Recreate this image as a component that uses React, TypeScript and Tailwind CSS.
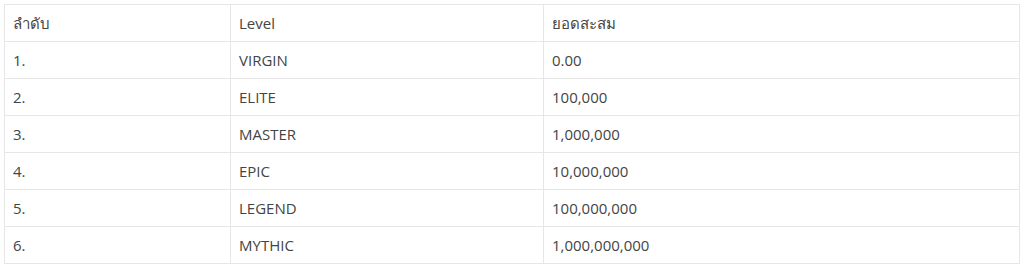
import React from "react";

const rows = [
  { no: "1.", level: "VIRGIN", total: "0.00" },
  { no: "2.", level: "ELITE", total: "100,000" },
  { no: "3.", level: "MASTER", total: "1,000,000" },
  { no: "4.", level: "EPIC", total: "10,000,000" },
  { no: "5.", level: "LEGEND", total: "100,000,000" },
  { no: "6.", level: "MYTHIC", total: "1,000,000,000" },
];

const App = () => {
  return (
    <div className="w-[1024px] h-[265px] bg-white pt-[4px] pl-[4px]">
      <table
        className="w-[1016px] border-collapse text-[15px] text-[#444] table-fixed"
        style={{ fontFamily: '"Open Sans", "Noto Sans", sans-serif' }}
      >
        <colgroup>
          <col className="w-[226px]" />
          <col className="w-[313px]" />
          <col />
        </colgroup>
        <thead>
          <tr className="h-[37px]">
            <th className="border border-[#e6e6e6] px-[8px] pt-[1px] text-left font-normal">ลำดับ</th>
            <th className="border border-[#e6e6e6] px-[8px] pt-[1px] text-left font-normal">Level</th>
            <th className="border border-[#e6e6e6] px-[8px] pt-[1px] text-left font-normal">ยอดสะสม</th>
          </tr>
        </thead>
        <tbody>
          {rows.map((row) => (
            <tr key={row.no} className="h-[37px]">
              <td className="border border-[#e6e6e6] px-[8px] pt-[1px]">{row.no}</td>
              <td className="border border-[#e6e6e6] px-[8px] pt-[1px]">{row.level}</td>
              <td className="border border-[#e6e6e6] px-[8px] pt-[1px]">{row.total}</td>
            </tr>
          ))}
        </tbody>
      </table>
    </div>
  );
};

export default App;
